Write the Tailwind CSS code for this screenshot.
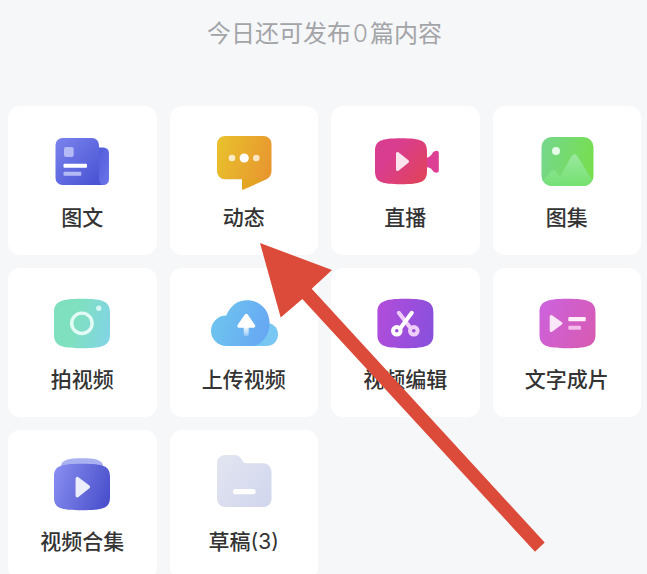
<!DOCTYPE html>
<html lang="zh-CN">

<head>
    <meta charset="UTF-8">
    <meta name="viewport" content="width=device-width, initial-scale=1.0">
    <title>发布</title>
    <script src="https://cdn.jsdelivr.net/npm/@tailwindcss/browser@4"></script>
</head>

<body class="h-screen overflow-hidden bg-[#f6f7f9] font-['Inter','Noto_Sans_CJK_SC',sans-serif]">
    <main class="relative pt-4 pr-[6px] pl-2">
        <p class="mb-[54px] text-center text-2xl/9 text-[#a3a4a7]">今日还可发布<span class="mx-[2px] font-light">0</span>篇内容</p>

        <div class="grid grid-cols-4 gap-[13px] text-[21px]/7 font-medium text-[#333333]">
            <button type="button" class="flex flex-col items-center gap-[10px] rounded-xl bg-white pt-6 pb-[23px]">
                <svg class="h-16 w-20" viewBox="0 0 80 64" fill="none" aria-hidden="true">
                    <defs>
                        <linearGradient id="doc" x1="0" y1="0" x2="1" y2="1">
                            <stop stop-color="#7b84ec" />
                            <stop offset="1" stop-color="#4650d2" />
                        </linearGradient>
                        <linearGradient id="doc-back" x1="0" y1="0" x2="1" y2="1">
                            <stop stop-color="#4d58d8" />
                            <stop offset="1" stop-color="#6c76ea" />
                        </linearGradient>
                    </defs>
                    <path d="M54 17.5h7.500a5.500 5.500 0 0 1 5.500 5.500v26.500a5.500 5.500 0 0 1-5.500 5.500H54z" fill="url(#doc-back)" />
                    <path d="M20.500 8h29.500a7 7 0 0 1 7 7v34c0 3 1 5 3 6H20.500a7 7 0 0 1-7-7V15a7 7 0 0 1 7-7z" fill="url(#doc)" />
                    <rect x="22" y="17" width="9.700" height="10" rx="2" fill="#b4baf6" />
                    <rect x="21.500" y="33.700" width="23.500" height="4" rx="1" fill="#fff" />
                    <rect x="21.500" y="41.700" width="17.800" height="4" rx="1" fill="#b4baf6" />
                </svg>
                <span>图文</span>
            </button>

            <button type="button" class="flex flex-col items-center gap-[10px] rounded-xl bg-white pt-6 pb-[23px]">
                <svg class="h-16 w-20" viewBox="0 0 80 64" fill="none" aria-hidden="true">
                    <defs>
                        <linearGradient id="chat" x1="0" y1="0.3" x2="1" y2="0.6">
                            <stop stop-color="#e8bf2c" />
                            <stop offset="1" stop-color="#e8962f" />
                        </linearGradient>
                    </defs>
                    <path d="M21 6h38.500a8 8 0 0 1 8 8v27c0 3.500-1.500 6-4.500 8L39.500 59.600q-1.500.5-1.500-1V49.300H21a8 8 0 0 1-8-8V14a8 8 0 0 1 8-8z" fill="url(#chat)" />
                    <path d="M38 49.300h24L39.500 59.600q-1.500.5-1.500-1z" fill="#dfa61c" fill-opacity=".6" />
                    <circle cx="28" cy="28" r="3.300" fill="#fcedc8" />
                    <circle cx="40.200" cy="28" r="4.600" fill="#fff" />
                    <circle cx="52.300" cy="28" r="3.300" fill="#fbe6c4" />
                </svg>
                <span>动态</span>
            </button>

            <button type="button" class="flex flex-col items-center gap-[10px] rounded-xl bg-white pt-6 pb-[23px]">
                <svg class="h-16 w-20" viewBox="0 0 80 64" fill="none" aria-hidden="true">
                    <defs>
                        <linearGradient id="live" x1="0" y1="0.1" x2="1" y2="0.8">
                            <stop offset=".3" stop-color="#d93d90" />
                            <stop offset="1" stop-color="#e0435c" />
                        </linearGradient>
                    </defs>
                    <path d="M60 28c4 0 6-2.500 8-5.500 1.500-2 5.800-3 5.800.5v17.500c0 3-4.300 2.500-5.800.5-2-3-4-4-8-4z" fill="#dc3f93" />
                    <path d="M36 8.300c20 0 26 2.500 26 13v20c0 10.500-6 13-26 13s-26-2.500-26-13v-20c0-10.500 6-13 26-13z" fill="url(#live)" />
                    <path d="M32.500 23.500v16L42.500 31.500z" fill="#fbe4ee" stroke="#fbe4ee" stroke-width="3" stroke-linejoin="round" />
                </svg>
                <span>直播</span>
            </button>

            <button type="button" class="flex flex-col items-center gap-[10px] rounded-xl bg-white pt-6 pb-[23px]">
                <svg class="h-16 w-20" viewBox="0 0 80 64" fill="none" aria-hidden="true">
                    <defs>
                        <linearGradient id="album" x1="0" y1="0.3" x2="1" y2="0.5">
                            <stop stop-color="#75d78b" />
                            <stop offset="1" stop-color="#77de50" />
                        </linearGradient>
                        <linearGradient id="hill" x1="0" y1="0" x2="0" y2="1">
                            <stop stop-color="#a2ebac" />
                            <stop offset="1" stop-color="#74e274" />
                        </linearGradient>
                    </defs>
                    <rect x="14.500" y="7" width="52" height="49" rx="10" fill="url(#album)" />
                    <path d="M16.500 50 24 41.500q2.500-2.500 5 0l4 5L45 25.500q2.500-3 5 0L65 50q-2 6-9 6H25q-6.500 0-8.500-6z" fill="url(#hill)" fill-opacity=".8" />
                    <circle cx="29" cy="21" r="4" fill="#e6fbe8" />
                </svg>
                <span>图集</span>
            </button>

            <button type="button" class="flex flex-col items-center gap-[10px] rounded-xl bg-white pt-6 pb-[23px]">
                <svg class="h-16 w-20" viewBox="0 0 80 64" fill="none" aria-hidden="true">
                    <defs>
                        <linearGradient id="camera" x1="0" y1="0.3" x2="1" y2="0.5">
                            <stop offset=".4" stop-color="#7fe0c0" />
                            <stop offset="1" stop-color="#82d5e2" />
                        </linearGradient>
                    </defs>
                    <path d="M40 6.700c22 0 28 3 28 14v21.500c0 11-6 14-28 14s-28-3-28-14V20.700c0-11 6-14 28-14z" fill="url(#camera)" />
                    <circle cx="39.900" cy="31.300" r="10.200" stroke="#e3fbf5" stroke-width="3.400" />
                    <circle cx="56.800" cy="16.300" r="2.700" fill="#d4f7f6" />
                </svg>
                <span>拍视频</span>
            </button>

            <button type="button" class="flex flex-col items-center gap-[10px] rounded-xl bg-white pt-6 pb-[23px]">
                <svg class="h-16 w-20" viewBox="0 0 80 64" fill="none" aria-hidden="true">
                    <defs>
                        <linearGradient id="cloud" x1="7" y1="24" x2="66" y2="46" gradientUnits="userSpaceOnUse">
                            <stop stop-color="#6fc6ee" />
                            <stop offset="1" stop-color="#66a5f4" />
                        </linearGradient>
                        <linearGradient id="stem" x1="0" y1="0" x2="0" y2="1">
                            <stop stop-color="#fff" />
                            <stop offset="1" stop-color="#fff" stop-opacity=".3" />
                        </linearGradient>
                    </defs>
                    <path d="M60 30.600c8 0 14 4.500 14 11.700S69 54 62 54H44z" fill="#77c7f2" />
                    <path d="M22.300 54A15.300 15.300 0 1 1 22.300 23.400Q29 8.300 43 8.300C56 8.300 65.600 18.500 65.600 31S57 54 48 54z" fill="url(#cloud)" />
                    <path d="M39.700 34h5v7.500a2.500 2.500 0 0 1-5 0z" fill="url(#stem)" />
                    <path d="M42.300 23.500 35 34h14.500z" fill="#fff" stroke="#fff" stroke-width="3.500" stroke-linejoin="round" />
                </svg>
                <span>上传视频</span>
            </button>

            <button type="button" class="flex flex-col items-center gap-[10px] rounded-xl bg-white pt-6 pb-[23px]">
                <svg class="h-16 w-20" viewBox="0 0 80 64" fill="none" aria-hidden="true">
                    <defs>
                        <linearGradient id="edit" x1="0" y1="0.3" x2="1" y2="0.5">
                            <stop stop-color="#b14ddb" />
                            <stop offset="1" stop-color="#8a50dc" />
                        </linearGradient>
                    </defs>
                    <path d="M40.400 6.700c22 0 28 3 28 14v21.500c0 11-6 14-28 14s-28-3-28-14V20.700c0-11 6-14 28-14z" fill="url(#edit)" />
                    <g stroke-width="4" stroke-linecap="round">
                        <path d="M33.800 20.800 45.500 36" stroke="#efcdfa" />
                        <circle cx="48.800" cy="38.800" r="3.800" stroke="#efcdfa" />
                        <path d="M46.800 20.800 35.500 36" stroke="#fff" />
                        <circle cx="31.800" cy="38.800" r="3.800" stroke="#fff" />
                    </g>
                </svg>
                <span>视频编辑</span>
            </button>

            <button type="button" class="flex flex-col items-center gap-[10px] rounded-xl bg-white pt-6 pb-[23px]">
                <svg class="h-16 w-20" viewBox="0 0 80 64" fill="none" aria-hidden="true">
                    <defs>
                        <linearGradient id="text-video" x1="0" y1="0.2" x2="1" y2="0.7">
                            <stop stop-color="#cd62dc" />
                            <stop offset="1" stop-color="#d65bb4" />
                        </linearGradient>
                    </defs>
                    <path d="M40.500 6.700c22 0 28 3 28 14v21.500c0 11-6 14-28 14s-28-3-28-14V20.700c0-11 6-14 28-14z" fill="url(#text-video)" />
                    <path d="M24.200 24.500v14L34 31.400z" fill="#fbe6fa" stroke="#fbe6fa" stroke-width="3" stroke-linejoin="round" />
                    <rect x="41.300" y="25" width="17.500" height="4.200" rx="1" fill="#fdeefa" />
                    <rect x="41.300" y="33.700" width="12.700" height="4" rx="1" fill="#f3bcea" />
                </svg>
                <span>文字成片</span>
            </button>

            <button type="button" class="flex flex-col items-center gap-[10px] rounded-xl bg-white pt-6 pb-[23px]">
                <svg class="h-16 w-20" viewBox="0 0 80 64" fill="none" aria-hidden="true">
                    <defs>
                        <linearGradient id="playlist" x1="0" y1="0.3" x2="1" y2="0.6">
                            <stop stop-color="#858bee" />
                            <stop offset="1" stop-color="#4b51cc" />
                        </linearGradient>
                    </defs>
                    <path d="M19 12c0-6 8-7.700 21-7.700S61 6 61 12v6H19z" fill="#a9b1f1" />
                    <path d="M40 9.700c22 0 28 2.500 28 13v20.500c0 10.500-6 13-28 13s-28-2.500-28-13V22.700c0-10.500 6-13 28-13z" fill="url(#playlist)" />
                    <path d="M35.300 24.700v17L46.300 33z" fill="#eceefd" stroke="#eceefd" stroke-width="3.500" stroke-linejoin="round" />
                </svg>
                <span>视频合集</span>
            </button>

            <button type="button" class="flex flex-col items-center gap-[10px] rounded-xl bg-white pt-6 pb-[23px]">
                <svg class="h-16 w-20" viewBox="0 0 80 64" fill="none" aria-hidden="true">
                    <defs>
                        <linearGradient id="draft" x1="0" y1="0" x2="1" y2="0.8">
                            <stop stop-color="#e3e5f0" />
                            <stop offset="1" stop-color="#d2d7ee" />
                        </linearGradient>
                    </defs>
                    <path d="M21 1h9.500c3 0 5 1.200 6.500 3.500l1.500 2.300c1.200 1.800 2.500 2.500 4.500 2.500h16.500a8 8 0 0 1 8 8V45a8 8 0 0 1-8 8H21a8 8 0 0 1-8-8V9a8 8 0 0 1 8-8z" fill="url(#draft)" />
                    <rect x="29" y="35" width="22.500" height="5.300" rx="2" fill="#fff" />
                </svg>
                <span>草稿<span class="font-normal">(3)</span></span>
            </button>
        </div>

        <!-- pointer to 动态 -->
        <svg class="pointer-events-none absolute top-[242px] left-[259px] h-[312px] w-[287px]" viewBox="259 242 287 312" aria-hidden="true">
            <path d="M260 243 332 270 311.700 288.700 544.700 542.500 535 551.700 302.300 299 280.700 317.500z" fill="#dc4b3a" />
        </svg>
    </main>
</body>

</html>
